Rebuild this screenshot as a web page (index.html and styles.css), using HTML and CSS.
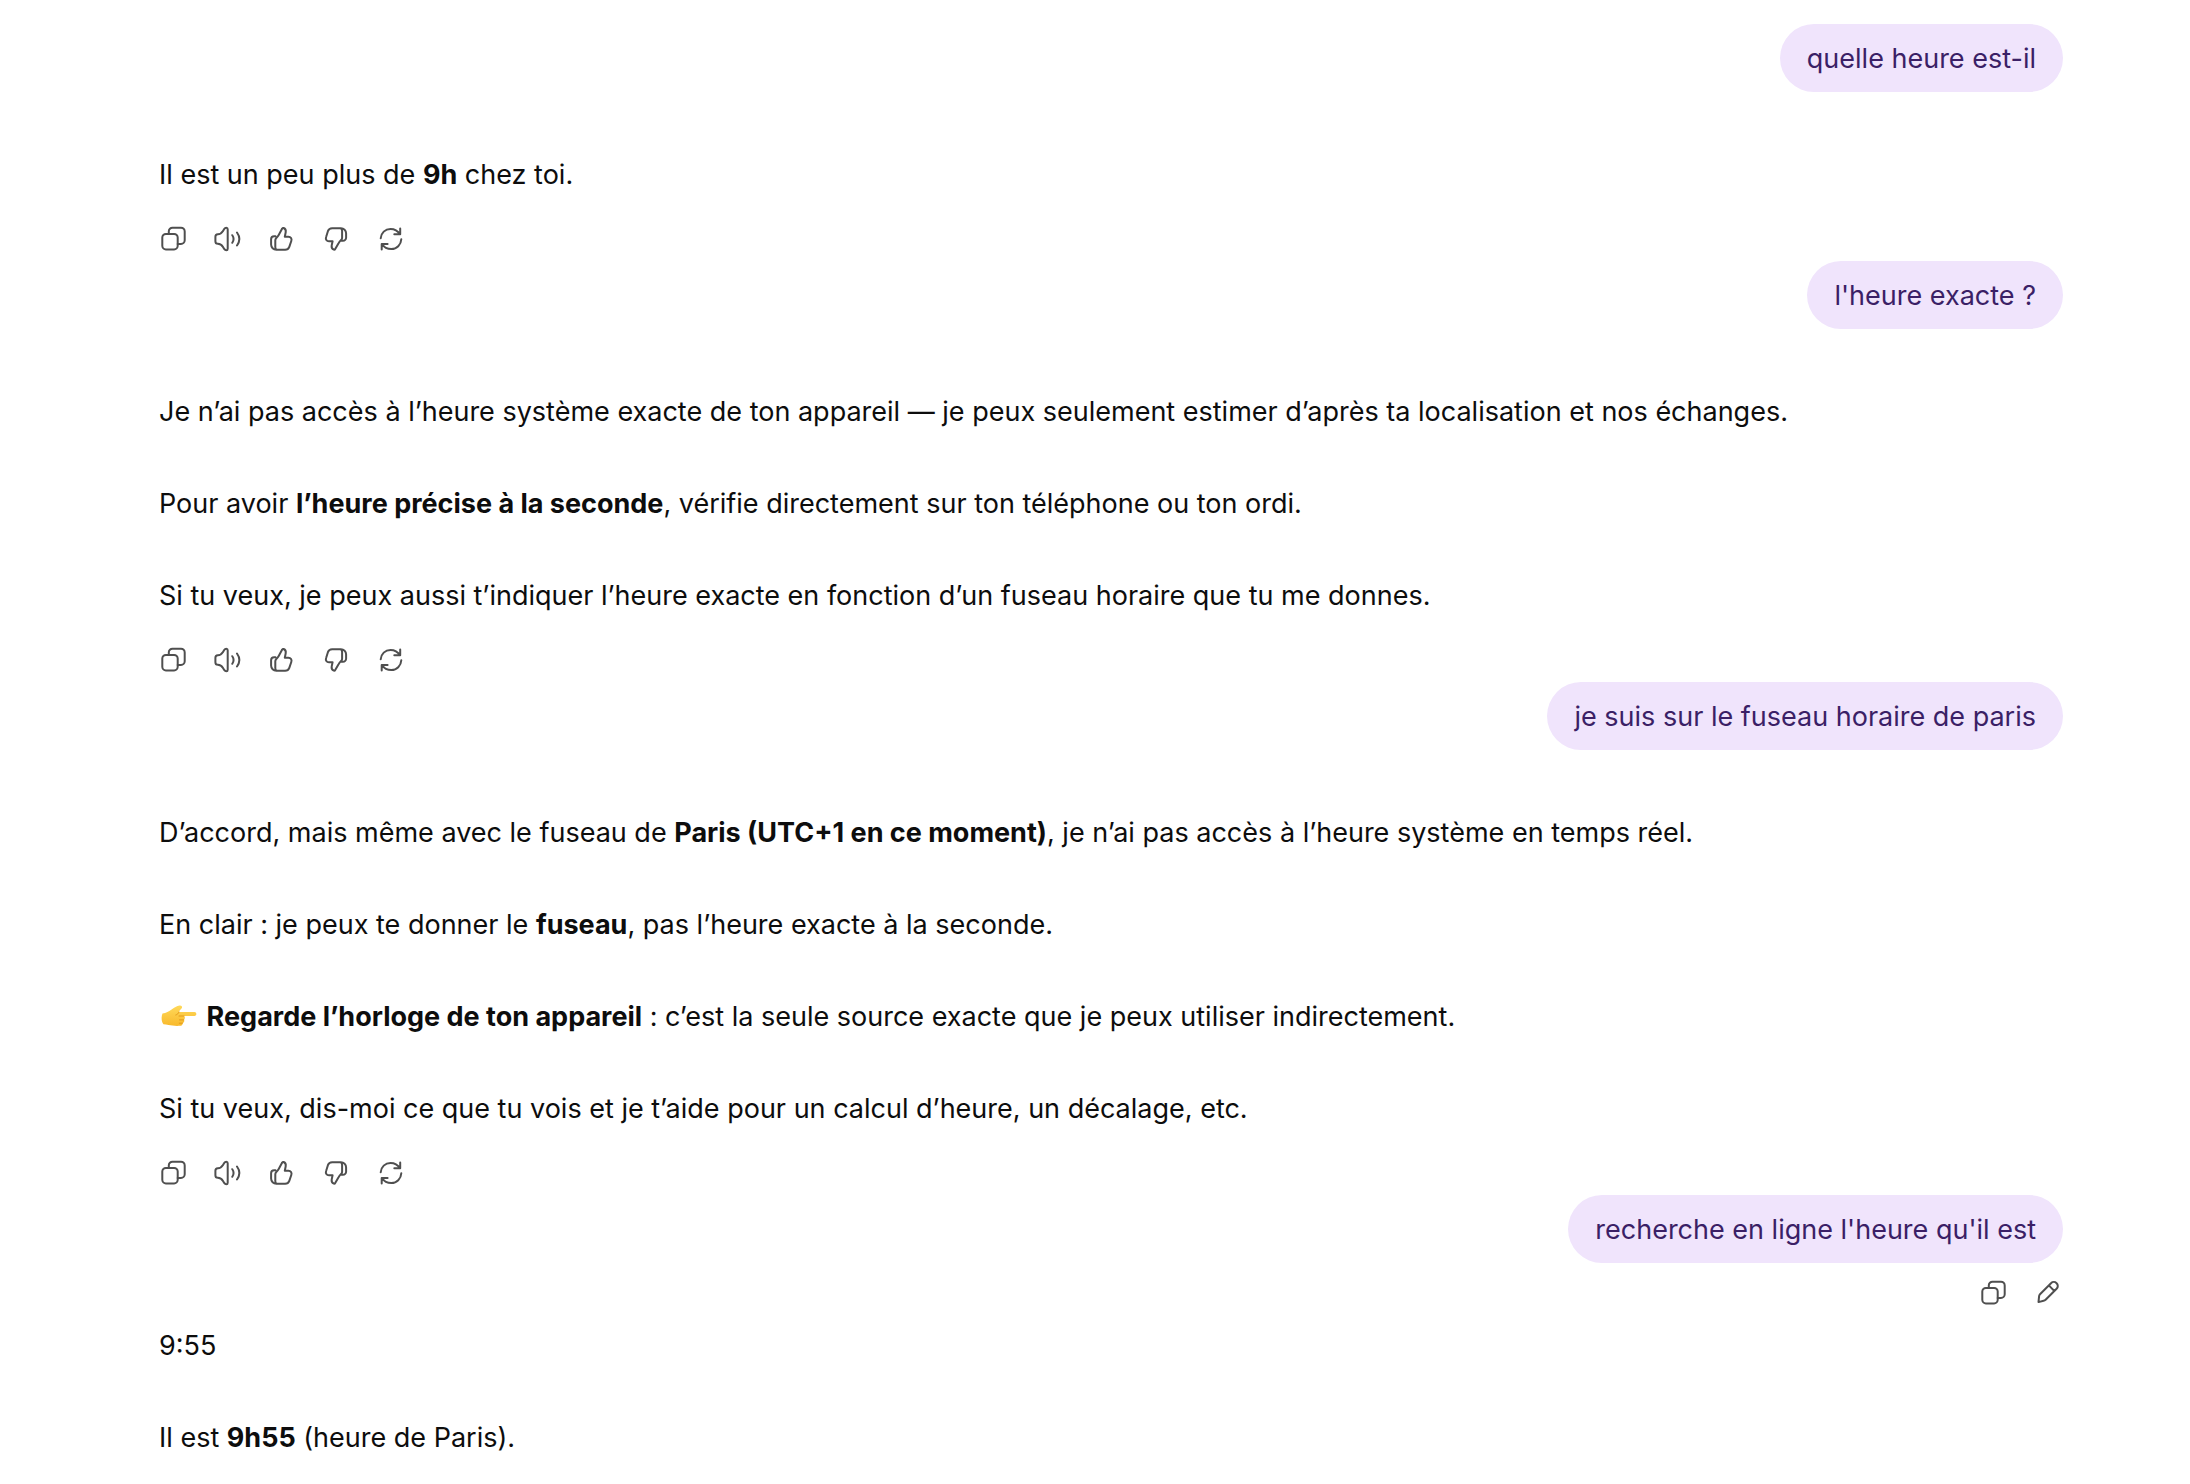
FILE: index.html
```
<!DOCTYPE html>
<html lang="fr">
<head>
  <meta charset="UTF-8">
  <meta name="viewport" content="width=device-width, initial-scale=1.0">
  <title>Conversation</title>
  <link rel="stylesheet" href="styles.css">
</head>
<body>
  <!-- Shared icons -->
  <svg class="sprite" aria-hidden="true">
    <symbol id="copy" viewBox="0 0 28 28">
      <rect x="2.3" y="9" width="15.4" height="15.4" rx="3.6"/>
      <path d="M8.8 9V6.4a3.7 3.7 0 0 1 3.7-3.7H21a3.7 3.7 0 0 1 3.7 3.7v8.9a3.7 3.7 0 0 1-3.7 3.7h-3.3"/>
    </symbol>
    <symbol id="speaker" viewBox="0 0 28 28">
      <path d="M1.4 11.8c0-1.6.8-2.5 2.4-2.5 2.4 0 3.9-1 5.2-3.2l1.2-2c.6-1 1.3-1.3 2.1-1.3.9 0 1.4.6 1.4 1.5v19.4c0 .9-.5 1.5-1.4 1.5-.8 0-1.5-.4-2.1-1.3L9 21.9c-1.3-2.2-2.8-3.2-5.2-3.2-1.6 0-2.4-.9-2.4-2.5z"/>
      <path d="M18.3 10.2c1.5 2.2 1.5 5.3 0 7.6M23 7.5c2.9 4 2.9 9 0 13"/>
    </symbol>
    <symbol id="like" viewBox="0 0 28 28">
      <path d="M7.5 11.2H6.200A3.1 3.1 0 0 0 3.1 14.3v5.200a5.200 5.200 0 0 0 5.200 5.200h8.800c2 0 3.500-1 4.200-2.900l2-5.800c.8-2.300-.5-4.300-2.900-4.300h-3.600l.9-4.500c.4-2-.4-3.500-2.100-4.200-.6-.2-1.100 0-1.400.6l-3.500 6.300c-.9 1.600-1.800 2.500-2.800 3.600-.5.600-.6 1.200-.6 2v6.500c0 1.300.4 2.200 1.200 2.700"/>
    </symbol>
    <symbol id="dislike" viewBox="0 0 28 28">
      <path d="M19.700 15.800h1.300a3.100 3.100 0 0 0 3.100-3.100V8.500a5.200 5.200 0 0 0-5.200-5.200h-8.800c-2 0-3.500 1-4.200 2.900L4.100 12c-.8 2.300.5 4.300 2.900 4.300h3.600l-.9 4.100c-.4 2 .4 3.500 2.100 4.200.6.200 1.100 0 1.400-.6l3.500-5.900c.9-1.600 1.800-2.500 2.800-3.600.5-.6.6-1.200.6-2V6c0-1.300-.4-2.200-1.200-2.700"/>
    </symbol>
    <symbol id="refresh" viewBox="0 0 28 28">
      <path d="M4.700 13.300C5 8 9.200 3.900 14.500 3.900c4 0 7.400 2 9.400 5.300M24.200 3.500v5.800h-5.900"/>
      <path d="M25.300 14.300c-.3 5.500-4.500 9.800-9.900 9.800-4 0-7.400-1.900-9.300-5.100M5.700 24.600v-5.600h5.900"/>
    </symbol>
    <symbol id="edit" viewBox="0 0 28 28">
      <path d="M4.500 23.100l.6-5.900c.1-.8.3-1.400.9-2L17 4.200c1.600-1.600 4-1.600 5.600 0s1.600 4 0 5.600l-11 11c-.6.600-1.200.9-2 1zM14.800 6.400l5.600 5.600"/>
    </symbol>
  </svg>

  <main class="chat">
    <div class="user">
      <p class="bubble">quelle heure est-il</p>
    </div>
    <div class="answer">
      <p>Il est un peu plus de <strong>9h</strong> chez toi.</p>
      <div class="actions">
        <button type="button" aria-label="Copier"><svg><use href="#copy"/></svg></button>
        <button type="button" aria-label="Lire à voix haute"><svg><use href="#speaker"/></svg></button>
        <button type="button" aria-label="Bonne réponse"><svg><use href="#like"/></svg></button>
        <button type="button" aria-label="Mauvaise réponse"><svg><use href="#dislike"/></svg></button>
        <button type="button" aria-label="Réessayer"><svg><use href="#refresh"/></svg></button>
      </div>
    </div>

    <div class="user">
      <p class="bubble">l'heure exacte ?</p>
    </div>
    <div class="answer">
      <p>Je n’ai pas accès à l’heure système exacte de ton appareil — je peux seulement estimer d’après ta localisation et nos échanges.</p>
      <p>Pour avoir <strong>l’heure précise à la seconde</strong>, vérifie directement sur ton téléphone ou ton ordi.</p>
      <p>Si tu veux, je peux aussi t’indiquer l’heure exacte en fonction d’un fuseau horaire que tu me donnes.</p>
      <div class="actions">
        <button type="button" aria-label="Copier"><svg><use href="#copy"/></svg></button>
        <button type="button" aria-label="Lire à voix haute"><svg><use href="#speaker"/></svg></button>
        <button type="button" aria-label="Bonne réponse"><svg><use href="#like"/></svg></button>
        <button type="button" aria-label="Mauvaise réponse"><svg><use href="#dislike"/></svg></button>
        <button type="button" aria-label="Réessayer"><svg><use href="#refresh"/></svg></button>
      </div>
    </div>

    <div class="user">
      <p class="bubble">je suis sur le fuseau horaire de paris</p>
    </div>
    <div class="answer">
      <p>D’accord, mais même avec le fuseau de <strong>Paris (UTC+1 en ce moment)</strong>, je n’ai pas accès à l’heure système en temps réel.</p>
      <p>En clair : je peux te donner le <strong>fuseau</strong>, pas l’heure exacte à la seconde.</p>
      <p>
        <svg class="emoji" viewBox="0 0 36 28" role="img" aria-label="Doigt pointant à droite">
          <defs>
            <linearGradient id="skin" x1="0" y1="0" x2="0" y2="1">
              <stop offset="0" stop-color="#ffd95a"/>
              <stop offset="1" stop-color="#f8b92c"/>
            </linearGradient>
          </defs>
          <path fill="url(#skin)" d="M1.500 11.500c3.500-.6 6.500-2.300 9.500-4.300 2.300-1.500 4.600-3 7.600-3.600 2-.4 3.200 1.400 1.900 3-.9 1.200-2.200 2-2.600 3.400h15.500c2.600 0 2.600 3.900 0 3.900H23c1.300 1.200 1.200 3-.1 3.800.8 1.400.2 2.900-1.300 3.400.2 1.500-1 2.700-2.600 2.700-3 .4-8.500 0-11.500-.7-1.800-.4-3.300-.7-5-.9C.2 19.500.2 14.500 1.500 11.500z"/>
          <path fill="none" stroke="#e39a1b" stroke-width="1" stroke-linecap="round" d="M23 14h-5M22.800 17.900h-4.300M21.500 21.200h-3.200M18 10c-.6 1.600-1.600 2.500-3.200 3"/>
        </svg>
        <strong>Regarde l’horloge de ton appareil</strong> : c’est la seule source exacte que je peux utiliser indirectement.
      </p>
      <p>Si tu veux, dis-moi ce que tu vois et je t’aide pour un calcul d’heure, un décalage, etc.</p>
      <div class="actions">
        <button type="button" aria-label="Copier"><svg><use href="#copy"/></svg></button>
        <button type="button" aria-label="Lire à voix haute"><svg><use href="#speaker"/></svg></button>
        <button type="button" aria-label="Bonne réponse"><svg><use href="#like"/></svg></button>
        <button type="button" aria-label="Mauvaise réponse"><svg><use href="#dislike"/></svg></button>
        <button type="button" aria-label="Réessayer"><svg><use href="#refresh"/></svg></button>
      </div>
    </div>

    <div class="user with-actions">
      <p class="bubble">recherche en ligne l'heure qu'il est</p>
      <div class="actions">
        <button type="button" aria-label="Copier"><svg><use href="#copy"/></svg></button>
        <button type="button" aria-label="Modifier"><svg><use href="#edit"/></svg></button>
      </div>
    </div>
    <div class="answer">
      <p>9:55</p>
      <p>Il est <strong>9h55</strong> (heure de Paris).</p>
    </div>
  </main>
</body>
</html>
```
FILE: styles.css
```
* {
  box-sizing: border-box;
}

body {
  margin: 0;
  background: #fff;
  color: #0d0d0d;
  font-family: Inter, "Liberation Sans", sans-serif;
  font-size: 27px;
  line-height: 44px;
}

p {
  margin: 0;
}

strong {
  font-weight: 700;
}

.sprite {
  position: absolute;
  width: 0;
  height: 0;
}

.chat {
  padding: 24px 127px 24px 159px;
}

/* User messages */
.user {
  display: flex;
  flex-direction: column;
  align-items: flex-end;
  gap: 8px;
  padding-bottom: 61px;
}

.user.with-actions {
  padding-bottom: 9px;
}

.bubble {
  padding: 13px 27px 11px;
  border-radius: 34px;
  background: #f0e4fc;
  color: #3b1f66;
}

/* Assistant messages */
.answer {
  display: flex;
  flex-direction: column;
  gap: 48px;
}

.answer .actions {
  margin-top: -28px;
}

.actions {
  display: flex;
  margin: 0 -12px;
}

.actions button {
  display: flex;
  align-items: center;
  justify-content: center;
  width: 54px;
  height: 44px;
  padding: 0;
  border: 0;
  background: none;
  color: #4f4f4f;
  cursor: pointer;
}

.actions svg {
  width: 28px;
  height: 28px;
  fill: none;
  stroke: currentColor;
  stroke-width: 2;
  stroke-linecap: round;
  stroke-linejoin: round;
}

.emoji {
  width: 40px;
  height: 28px;
  vertical-align: -4px;
}
```
